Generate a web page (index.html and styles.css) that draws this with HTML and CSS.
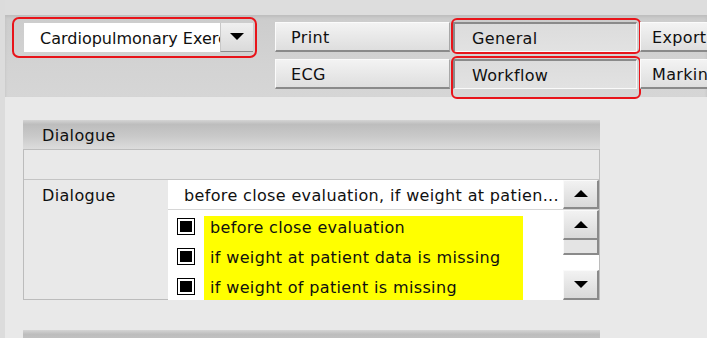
FILE: index.html
```html
<!DOCTYPE html>
<html lang="en">
<head>
  <meta charset="UTF-8" />
  <title>Settings – Dialogue</title>
  <link rel="stylesheet" href="styles.css">
</head>
<body>
  <div class="app">
    <div class="side-strip"></div>
    <div class="main">

      <div class="toolbar">
        <div class="combo-ring">
          <div class="combo">
            <span class="combo-text">Cardiopulmonary Exercise Test</span>
            <span class="combo-btn">
              <svg width="14" height="8" viewBox="0 0 14 8"><polygon points="0,0 14,0 7,7" fill="#000"/></svg>
            </span>
          </div>
        </div>

        <div class="btn-grid">
          <button class="tbtn">Print</button>
          <button class="tbtn pressed marked mark-top">General</button>
          <button class="tbtn edge">Export</button>
          <button class="tbtn">ECG</button>
          <button class="tbtn pressed marked mark-bottom">Workflow</button>
          <button class="tbtn edge">Marking</button>
        </div>
      </div>

      <div class="content">
        <div class="panel">
          <div class="panel-head">Dialogue</div>
          <div class="panel-body">
            <div class="empty-row"></div>
            <div class="field-row">
              <div class="field-label">Dialogue</div>
              <div class="field-value">
                <div class="value-line">
                  <span class="value-text">before close evaluation, if weight at patien...</span>
                  <span class="sbtn line-btn">
                    <svg width="14" height="8" viewBox="0 0 14 8"><polygon points="7,0 14,7 0,7" fill="#000"/></svg>
                  </span>
                </div>
                <div class="list-area">
                  <div class="list">
                    <div class="list-row">
                      <span class="check"></span>
                      <span class="item first">before close evaluation</span>
                    </div>
                    <div class="list-row">
                      <span class="check"></span>
                      <span class="item">if weight at patient data is missing</span>
                    </div>
                    <div class="list-row">
                      <span class="check"></span>
                      <span class="item">if weight of patient is missing</span>
                    </div>
                  </div>
                  <div class="vscroll">
                    <span class="sbtn up">
                      <svg width="14" height="8" viewBox="0 0 14 8"><polygon points="7,0 14,7 0,7" fill="#000"/></svg>
                    </span>
                    <span class="thumb"></span>
                    <span class="track"></span>
                    <span class="sbtn down">
                      <svg width="14" height="8" viewBox="0 0 14 8"><polygon points="0,0 14,0 7,7" fill="#000"/></svg>
                    </span>
                  </div>
                </div>
              </div>
            </div>
          </div>
        </div>
        <div class="panel-head next"></div>
      </div>

    </div>
  </div>
</body>
</html>
```

FILE: styles.css
```css
body {
  margin: 0;
  font-family: 'DejaVu Sans', Verdana, sans-serif;
  font-size: 16px;
  letter-spacing: 0.35px;
  color: #101010;
  background: #dddddd;
  overflow: hidden;
}

.app {
  display: flex;
  width: 707px;
  height: 338px;
}

.side-strip {
  width: 5px;
  flex: none;
  background: #dcdcdc;
}

.main {
  flex: 1;
  padding-top: 15px;
  overflow: hidden;
}

/* toolbar */

.toolbar {
  display: flex;
  align-items: flex-start;
  height: 82px;
  background: linear-gradient(#cccccc, #d3d3d3 60%, #d6d6d6);
  box-shadow: inset 0 2px 3px #bdbdbd;
}

.combo-ring {
  flex: none;
  margin: 2px 0 0 7px;
  padding: 4px 2px 4px 10px;
  border: 2px solid #e8141a;
  border-radius: 7px;
}

.combo {
  display: flex;
  width: 229px;
  height: 29px;
}

.combo-text {
  width: 196px;
  flex: none;
  background: #fff;
  padding: 2px 0 0 16px;
  box-sizing: border-box;
  line-height: 27px;
  letter-spacing: 0;
  white-space: nowrap;
  overflow: hidden;
}

.combo-btn {
  flex: 1;
  display: flex;
  align-items: center;
  justify-content: center;
  background: linear-gradient(#f0f0f0, #dadada);
  border-left: 1px solid #c8c8c8;
  border-bottom: 1px solid #8c8c8c;
}

.btn-grid {
  flex: none;
  display: grid;
  grid-template-columns: 175px 184px 80px;
  grid-auto-rows: 30px;
  column-gap: 3px;
  row-gap: 7px;
  margin: 7px 0 0 18px;
}

.tbtn {
  position: relative;
  font: inherit;
  letter-spacing: inherit;
  color: inherit;
  text-align: left;
  padding: 2px 0 0 15px;
  white-space: nowrap;
  overflow: visible;
  background: linear-gradient(#f3f3f3, #dedede);
  border-top: 1px solid #fbfbfb;
  border-left: 1px solid #fbfbfb;
  border-right: 1px solid #a8a8a8;
  border-bottom: 2px solid #8a8a8a;
}

.tbtn.edge {
  padding-left: 11px;
}

.tbtn.pressed {
  padding-left: 17px;
  background: linear-gradient(#dcdcdc, #e2e2e2);
  border-top: 2px solid #8a8a8a;
  border-left: 2px solid #8a8a8a;
  border-right: 1px solid #fafafa;
  border-bottom: 1px solid #fafafa;
}

.tbtn.marked::after {
  content: "";
  position: absolute;
  left: -4px;
  right: -5px;
  border: 2px solid #e8141a;
  border-radius: 6px;
}

.mark-top::after {
  top: -6px;
  bottom: -3px;
}

.mark-bottom::after {
  top: -5px;
  bottom: -11px;
}

/* content */

.content {
  background: #e9e9e9;
  height: 241px;
  padding: 23px 0 0 18px;
}

.panel {
  width: 577px;
}

.panel-head {
  height: 30px;
  box-sizing: border-box;
  padding: 2px 0 0 19px;
  line-height: 27px;
  background: linear-gradient(#d4d4d4, #bdbdbd 15%, #c9c9c9 55%, #dcdcdc);
  border-bottom: 1px solid #bdbdbd;
}

.panel-body {
  border-left: 1px solid #bcbcbc;
  border-right: 1px solid #bcbcbc;
  border-bottom: 1px solid #bcbcbc;
}

.empty-row {
  height: 29px;
  border-bottom: 1px solid #c4c4c4;
}

.field-row {
  display: flex;
  height: 119px;
}

.field-label {
  width: 144px;
  flex: none;
  padding: 6px 0 0 18px;
  box-sizing: border-box;
}

.field-value {
  flex: 1;
  display: flex;
  flex-direction: column;
}

.value-line {
  display: flex;
  height: 29px;
  background: #fff;
  border-bottom: 1px solid #d6d6d6;
}

.value-text {
  flex: 1;
  padding: 3px 0 0 16px;
  line-height: 26px;
  white-space: nowrap;
  overflow: hidden;
}

.sbtn {
  display: flex;
  align-items: center;
  justify-content: center;
  box-sizing: border-box;
  background: linear-gradient(#f2f2f2, #d9d9d9);
  border-top: 1px solid #fafafa;
  border-left: 1px solid #fafafa;
  border-right: 2px solid #8a8a8a;
  border-bottom: 2px solid #8a8a8a;
}

.line-btn {
  width: 36px;
  flex: none;
}

.list-area {
  flex: 1;
  display: flex;
}

.list {
  flex: 1;
  background: #fff;
  overflow: hidden;
}

.list-row {
  display: flex;
  align-items: center;
  height: 30px;
}

.check {
  width: 18px;
  height: 17px;
  margin: 2px 9px 0;
  box-sizing: border-box;
  border: 1.5px solid #000;
  background: #000;
  box-shadow: inset 0 0 0 2px #fff;
}

.item {
  width: 319px;
  height: 30px;
  padding: 5px 0 0 6px;
  box-sizing: border-box;
  line-height: 25px;
  background: #ffff00;
  white-space: nowrap;
}

.item.first {
  background: linear-gradient(transparent 6px, #ffff00 6px);
}

.vscroll {
  width: 36px;
  flex: none;
  display: flex;
  flex-direction: column;
}

.vscroll .up {
  height: 30px;
}

.thumb {
  height: 15px;
  box-sizing: border-box;
  background: #e4e4e4;
  border-right: 2px solid #8a8a8a;
  border-bottom: 2px solid #8a8a8a;
  border-left: 1px solid #fafafa;
}

.track {
  height: 15px;
  background: #fff;
}

.vscroll .down {
  flex: 1;
}

.panel-head.next {
  width: 577px;
  margin-top: 30px;
}
```
